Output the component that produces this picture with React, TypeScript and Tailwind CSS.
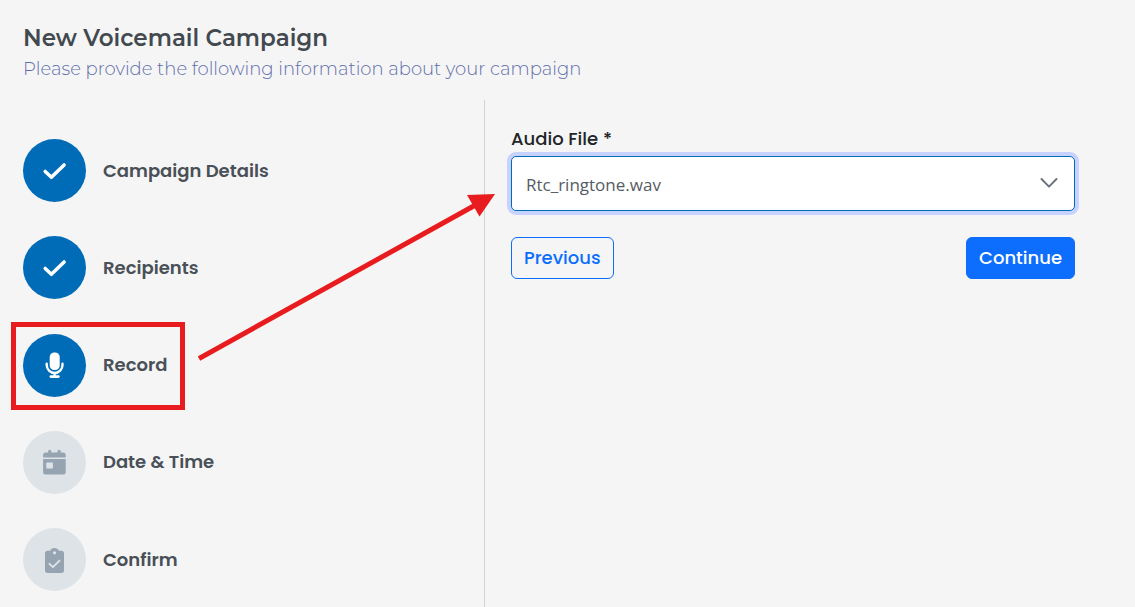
import type { ReactNode } from 'react';

type StepState = 'active' | 'pending';

type Step = {
  label: string;
  state: StepState;
  icon: ReactNode;
  marked?: boolean;
};

const CheckIcon = () => (
  <svg viewBox="0 0 28 28" className="size-7" fill="none" aria-hidden="true">
    <path d="M4.2 14.4 L10.4 20.3 L23.1 7.9" stroke="currentColor" strokeWidth="3.5" strokeLinecap="round" strokeLinejoin="round" />
  </svg>
);

const MicIcon = () => (
  <svg viewBox="0 0 28 28" className="size-7" fill="none" aria-hidden="true">
    <rect x="8.7" y="1.4" width="10" height="17.6" rx="4.6" fill="currentColor" />
    <path d="M5.7 12.7 V14.1 A7.9 7.9 0 0 0 21.5 14.1 V12.7 M13.6 22 V25.5" stroke="currentColor" strokeWidth="2.4" strokeLinecap="round" />
    <path d="M9.9 25.6 H17.3" stroke="currentColor" strokeWidth="2.8" strokeLinecap="round" />
  </svg>
);

const CalendarIcon = () => (
  <svg viewBox="0.5 0 28 28" className="size-7" fill="currentColor" aria-hidden="true">
    <path d="M7.6 4.4 V3.4 A1.6 1.6 0 0 1 10.8 3.4 V4.4 H17 V3.4 A1.6 1.6 0 0 1 20.2 3.4 V4.4 H22.6 A2.6 2.6 0 0 1 25.2 7 V9.5 H2.6 V7 A2.6 2.6 0 0 1 5.2 4.4 Z" />
    <path fillRule="evenodd" d="M2.6 10.9 H25.2 V24.2 A2.3 2.3 0 0 1 22.9 26.5 H4.9 A2.3 2.3 0 0 1 2.6 24.2 Z M6.4 14.4 A0.6 0.6 0 0 0 5.8 15 V20 A0.6 0.6 0 0 0 6.4 20.6 H11.8 A0.6 0.6 0 0 0 12.4 20 V15 A0.6 0.6 0 0 0 11.8 14.4 Z" />
  </svg>
);

const ClipboardIcon = () => (
  <svg viewBox="0.5 0 28 28" className="size-7" aria-hidden="true">
    <path fill="currentColor" fillRule="evenodd" d="M7.2 4.8 H9.6 A4.8 4.8 0 0 1 18.4 4.8 H20.8 A2.7 2.7 0 0 1 23.5 7.5 V24.3 A2.7 2.7 0 0 1 20.8 27 H7.2 A2.7 2.7 0 0 1 4.5 24.3 V7.5 A2.7 2.7 0 0 1 7.2 4.8 Z M14 5.2 A1.6 1.6 0 1 0 14 8.4 A1.6 1.6 0 1 0 14 5.2 Z" />
    <path d="M9 17.8 L12.4 21.2 L19 14.6" fill="none" stroke="#dee3e7" strokeWidth="1.9" strokeLinecap="round" strokeLinejoin="round" />
  </svg>
);

const steps: Step[] = [
  { label: 'Campaign Details', state: 'active', icon: <CheckIcon /> },
  { label: 'Recipients', state: 'active', icon: <CheckIcon /> },
  { label: 'Record', state: 'active', icon: <MicIcon />, marked: true },
  { label: 'Date & Time', state: 'pending', icon: <CalendarIcon /> },
  { label: 'Confirm', state: 'pending', icon: <ClipboardIcon /> },
];

const circleColors: Record<StepState, string> = {
  active: 'bg-[#006cb7] text-white',
  pending: 'bg-[#dee3e7] text-[#96a4b1]',
};

function Marker() {
  return (
    <div className="pointer-events-none" aria-hidden="true">
      <div className="absolute -top-3 -left-3 h-[88px] w-[174px] border-5 border-[#e81c1e]" />
      <svg viewBox="0 0 300 170" className="absolute -top-[140px] left-[175px] h-[170px] w-[300px] max-w-none">
        <path d="M1 164.5 L282 8.5" stroke="#e81c1e" strokeWidth="5" />
        <path d="M297 0 L269 1 L281.5 22.5 Z" fill="#e81c1e" />
      </svg>
    </div>
  );
}

function StepItem({ step }: { step: Step }) {
  return (
    <li className="relative flex items-center gap-[17px]">
      <span className={`flex size-[63px] shrink-0 items-center justify-center rounded-full ${circleColors[step.state]}`}>
        {step.icon}
      </span>
      <span className="text-lg leading-7 font-semibold text-[#495057]">{step.label}</span>
      {step.marked && <Marker />}
    </li>
  );
}

export default function App() {
  return (
    <main className="flex min-h-screen flex-col bg-[#f5f5f5] pl-[23px] font-['Poppins','Inter',sans-serif]">
      <header className="pt-[22px] pb-[15px] font-['Montserrat','Inter',sans-serif]">
        <h1 className="text-[23px] leading-8 font-semibold text-[#42494f]">New Voicemail Campaign</h1>
        <p className="text-lg leading-[31px] font-light text-[#5f6dac]">
          Please provide the following information about your campaign
        </p>
      </header>
      <div className="flex flex-1">
        <ol className="flex min-h-[507px] w-[42%] max-w-[462px] min-w-[280px] flex-col justify-between border-r border-[#ced4da] pt-[39px] pb-4">
          {steps.map((step) => (
            <StepItem key={step.label} step={step} />
          ))}
        </ol>
        <form className="flex-1 pt-[26px] pr-[60px] pl-[26px]" onSubmit={(e) => e.preventDefault()}>
          <label htmlFor="audio-file" className="block text-lg leading-[26px] font-medium text-[#212529]">
            Audio File *
          </label>
          <div className="relative mt-1">
            <select
              id="audio-file"
              className="block h-[55px] w-full appearance-none rounded-[5px] border border-[#006cb7] bg-white pt-0.5 pr-12 pl-3.5 font-['Open_Sans','Noto_Sans',sans-serif] text-[17px] text-[#555c63] ring-4 ring-[#c7d2fe] outline-none"
            >
              <option>Rtc_ringtone.wav</option>
            </select>
            <svg viewBox="0 0 18 12" className="pointer-events-none absolute top-[21px] right-[17px] h-3 w-[18px]" fill="none" aria-hidden="true">
              <path d="M1.5 2 L9 9.6 L16.5 2" stroke="#6b747c" strokeWidth="2" strokeLinecap="round" strokeLinejoin="round" />
            </svg>
          </div>
          <div className="mt-[26px] flex justify-between text-lg font-medium">
            <button type="button" className="h-[42px] rounded-md border border-[#0d6efd] px-3 text-[#0d6efd]">
              Previous
            </button>
            <button type="submit" className="h-[42px] rounded-md border border-[#0d6efd] bg-[#0d6efd] px-3 text-white">
              Continue
            </button>
          </div>
        </form>
      </div>
    </main>
  );
}
